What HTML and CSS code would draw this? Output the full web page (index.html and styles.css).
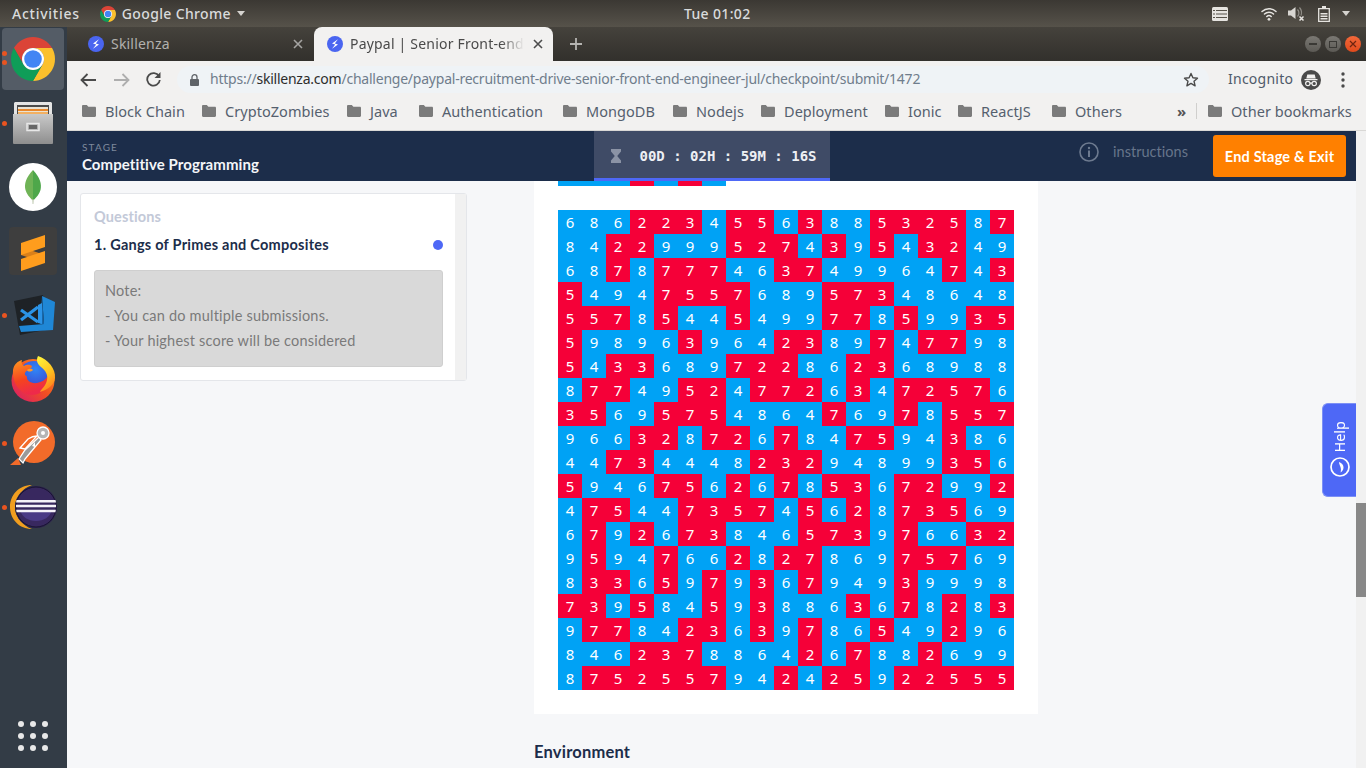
FILE: index.html
```html
<!DOCTYPE html>
<html lang="en">
<head>
<meta charset="utf-8">
<title>Paypal | Senior Front-end Engineer</title>
<link rel="stylesheet" href="styles.css">
</head>
<body>
<svg class="defs" width="0" height="0" aria-hidden="true">
  <symbol id="chrome" viewBox="4 4 40 40">
    <path fill="#db4437" d="M41.32 14A20 20 0 0 0 6.68 14L15.34 29A10 10 0 0 1 24 14Z"/>
    <path fill="#fbc02d" d="M24 44A20 20 0 0 0 41.32 14H24A10 10 0 0 1 32.66 29Z"/>
    <path fill="#0f9d58" d="M6.68 14A20 20 0 0 0 24 44L32.66 29A10 10 0 0 1 15.34 29Z"/>
    <circle cx="24" cy="24" r="10" fill="#fff"/>
    <circle cx="24" cy="24" r="8" fill="#4285f4"/>
  </symbol>
  <symbol id="bolt" viewBox="0 0 16 16">
    <circle cx="8" cy="8" r="8" fill="#4a65f0"/>
    <path fill="#fff" d="M11 3.2 5 7.6l3.2.9L5 12.8l6-4.4-3.2-.9z"/>
  </symbol>
  <symbol id="folder" viewBox="0 0 14 12">
    <path fill="#7b7b7b" d="M0 1.2C0 .5.5 0 1.2 0h3.6l1.6 1.7h6.400c.7 0 1.200.5 1.200 1.200v7.900c0 .7-.5 1.200-1.200 1.200H1.200C.5 12 0 11.500 0 10.800z"/>
  </symbol>
</svg>

<header class="topbar">
  <span class="tb-label tb-activities">Activities</span>
  <svg class="tb-chrome"><use href="#chrome"/></svg>
  <span class="tb-label">Google Chrome</span>
  <span class="tb-tri"></span>
  <span class="tb-label tb-clock">Tue 01:02</span>
  <div class="tb-tray">
    <svg class="tray-list" viewBox="0 0 16 14"><rect width="16" height="14" rx="1.500" fill="#e6e4e0"/><path stroke="#57534a" stroke-width="1.200" d="M1 3.500h2M4 3.500h11M1 7h2M4 7h11M1 10.500h2M4 10.500h11"/></svg>
    <svg class="tray-wifi" viewBox="0 0 16 14"><g fill="none" stroke="#e6e4e0" stroke-width="1.500" stroke-linecap="round"><path d="M1 4.500a10 10 0 0 1 14 0"/><path d="M3.500 7a6.500 6.500 0 0 1 9 0"/><path d="M5.800 9.500a3.200 3.200 0 0 1 4.400 0"/></g><circle cx="8" cy="12.300" r="1.400" fill="#e6e4e0"/></svg>
    <svg class="tray-vol" viewBox="0 0 17 15"><path fill="#d8d6d2" d="M0 4.500h3L7.500 1v12L3 9.500H0z"/><g fill="none" stroke="#908d87" stroke-width="1.200"><path d="M9.500 3.500a5 5 0 0 1 0 7"/><path d="M11.500 1.500a8 8 0 0 1 1.500 8"/></g><path stroke="#e6e4e0" stroke-width="1.500" d="M11.500 10.500l4 4M15.500 10.500l-4 4"/></svg>
    <svg class="tray-bat" viewBox="0 0 12 16"><path fill="none" stroke="#e6e4e0" stroke-width="1.300" d="M.7 2.700h10.600v12.600H.7z"/><path fill="#e6e4e0" d="M4 0h4v2.500H4zM2.500 7h7v1.500h-7zM2.500 9.500h7V11h-7zM2.500 12h7v1.500h-7z"/></svg>
    <span class="tb-tri"></span>
  </div>
</header>

<div class="desktop">
  <nav class="dock">
    <div class="dock-item active">
      <span class="dot dot-a"></span><span class="dot dot-b"></span>
      <svg class="ic-chrome"><use href="#chrome"/></svg>
    </div>
    <div class="dock-item">
      <span class="dot"></span>
      <svg class="ic-44" viewBox="0 0 44 44">
        <defs><linearGradient id="cab" x1="0" y1="0" x2="0" y2="1"><stop offset="0" stop-color="#c9c9c9"/><stop offset="1" stop-color="#8e8e8e"/></linearGradient></defs>
        <path fill="#e4e4e4" d="M4 1h36l1 1v11H3V2z"/>
        <path fill="#4a4a4a" d="M6 4h32v9H6z"/>
        <path fill="#e9e3d5" d="M7 6h30v7H7z"/>
        <path fill="#e8872c" d="M7 8h30v2H7z"/>
        <path fill="#f2b062" d="M7 11h30v2H7z"/>
        <path fill="url(#cab)" d="M2 13h40v29a1 1 0 0 1-1 1H3a1 1 0 0 1-1-1z"/>
        <path fill="none" stroke="#e8e8e8" stroke-width="1.500" d="M16 22.500h12v7H16z"/>
        <path fill="#666" d="M18 24h8v4h-8z"/>
      </svg>
    </div>
    <div class="dock-item">
      <svg class="ic-48" viewBox="0 0 48 48">
        <circle cx="24" cy="24" r="24" fill="#fff"/>
        <path fill="#4ea74a" d="M24 7c7 7.500 9 14 7.500 20-1 4-4 7-6.700 10H24z"/>
        <path fill="#6fb356" d="M24 7c-7 7.500-9 14-7.500 20 1 4 4 7 6.700 10H24z"/>
        <path fill="#b8c4a8" d="M23.300 36h1.400l-.3 5h-.8z"/>
      </svg>
    </div>
    <div class="dock-item">
      <svg class="ic-48" viewBox="0 0 48 48">
        <rect width="48" height="48" rx="4" fill="#3e3e3e"/>
        <path fill="#d9801a" d="M12 20l24 8v8L12 28z"/>
        <path fill="#ff9d1d" d="M12 16 36 8v12L12 28z"/>
        <path fill="#ff9d1d" d="M12 32l24-8v12l-24 8z"/>
      </svg>
    </div>
    <div class="dock-item">
      <span class="dot"></span>
      <svg class="ic-44" viewBox="0 0 44 44">
        <path fill="#1e2226" d="M3 8 32 2l6 34-29 6z"/>
        <path fill="#1f87d6" d="M31 3l13 6-2 28-32 2-2-6 25-2z"/>
        <path fill="#1665a8" d="M31 3l2 28-4 .500z"/>
        <path fill="none" stroke="#2b93e6" stroke-width="3.200" d="M10 17l17 12M10 27l17-13"/>
        <path fill="#2b93e6" d="M27 12l4-2v21l-4-1z"/>
      </svg>
    </div>
    <div class="dock-item">
      <svg class="ic-46" viewBox="0 0 46 46">
        <defs>
          <linearGradient id="ffb" x1="0" y1="1" x2="1" y2="0"><stop offset="0" stop-color="#d9166f"/><stop offset=".5" stop-color="#f04e23"/><stop offset="1" stop-color="#ff9a1b"/></linearGradient>
          <radialGradient id="ffc" cx=".55" cy=".3" r=".75"><stop offset="0" stop-color="#2f86f7"/><stop offset=".7" stop-color="#3a55d8"/><stop offset="1" stop-color="#5b2aa5"/></radialGradient>
          <linearGradient id="ffy" x1=".2" y1="0" x2=".6" y2="1"><stop offset="0" stop-color="#fff23a"/><stop offset=".55" stop-color="#ffc21f"/><stop offset="1" stop-color="#ff7f1f"/></linearGradient>
          <linearGradient id="ffo" x1="0" y1="0" x2=".3" y2="1"><stop offset="0" stop-color="#ff9a1f"/><stop offset=".6" stop-color="#f5431f"/><stop offset="1" stop-color="#ee2a4a"/></linearGradient>
        </defs>
        <circle cx="23" cy="24.500" r="21.500" fill="url(#ffb)"/>
        <ellipse cx="24" cy="19" rx="15" ry="14" fill="url(#ffc)"/>
        <path fill="url(#ffo)" d="M3 14c1-6 5-9 9-10-1 2 0 5 2 6 3-2 6-1 8 0 0 3-6 4-7 7-1 2 2 3 2 4-1 3 4 7 10 6 5-1 8-3 11-7 3 8-5 19-16 19C11 39 2 28 3 14z"/>
        <path fill="#ff9a2a" d="M17 14c3-2 5-1 6 0-2 2-5 2-6 0z"/>
        <path fill="url(#ffy)" d="M28 0c-2 4-1 8 3 11 5 4 7 8 6 13-1 6-6 9-7 12 8-2 15-8 15-14C46 13 38 3 28 0z"/>
      </svg>
    </div>
    <div class="dock-item">
      <span class="dot"></span>
      <svg class="ic-46" viewBox="0 0 46 46">
        <circle cx="24" cy="22" r="21" fill="#f26b2a"/>
        <path fill="#f26b2a" d="M0 45l8-7 3 7z"/>
        <g transform="translate(-1 2)">
          <path fill="#9a9a9a" stroke="#fff" stroke-width="1.300" d="M10 37l6-9 14-13 2 3-11 13-5 6-2 4z"/>
          <path fill="#f26b2a" stroke="#fff" stroke-width="1.300" d="M11 26l8-9c3-2 6-3 9-3l-12 13z"/>
          <path fill="#fff" d="M23 24l3-4v5z"/>
          <circle cx="34" cy="11" r="6" fill="#b5b5b5" stroke="#fff" stroke-width="1.300"/>
          <circle cx="34" cy="11" r="2" fill="#fff"/>
        </g>
      </svg>
    </div>
    <div class="dock-item">
      <span class="dot"></span>
      <svg class="ic-50" viewBox="0 0 50 46">
        <path fill="#f19e1f" d="M24 1C11 1 2 11 2 23s9 22 22 22C15 42 7 33 7 23S15 4 24 1z"/>
        <circle cx="28" cy="23" r="21" fill="#2d2150"/>
        <circle cx="28" cy="23" r="20" fill="#38285f" stroke="#1a1533" stroke-width="1"/>
        <path fill="#4a3a85" d="M12 26h32c-2 7-8 11-16 11s-14-4-16-11z"/>
        <path fill="#f4f2f8" d="M8.500 16h39l.6 2.500H8zM8 20.700h40v2.600H8zM8.100 25.700h39.800l-.5 2.500H8.600z"/>
      </svg>
    </div>
    <div class="dock-item dock-apps">
      <svg class="ic-apps" viewBox="0 0 30 30"><g fill="#e8e8e8"><circle cx="3" cy="3" r="3"/><circle cx="15" cy="3" r="3"/><circle cx="27" cy="3" r="3"/><circle cx="3" cy="15" r="3"/><circle cx="15" cy="15" r="3"/><circle cx="27" cy="15" r="3"/><circle cx="3" cy="27" r="3"/><circle cx="15" cy="27" r="3"/><circle cx="27" cy="27" r="3"/></g></svg>
    </div>
  </nav>

  <div class="browser">
    <div class="tabstrip">
      <div class="tab">
        <svg class="favicon"><use href="#bolt"/></svg>
        <span class="tab-title">Skillenza</span>
        <svg class="tab-x" viewBox="0 0 10 10"><path stroke="#a5a4a2" stroke-width="1.600" d="M1 1l8 8M9 1 1 9"/></svg>
      </div>
      <div class="tab tab-active">
        <svg class="favicon"><use href="#bolt"/></svg>
        <span class="tab-title">Paypal | Senior Front-end Engineer</span>
        <svg class="tab-x" viewBox="0 0 10 10"><path stroke="#4c4c4c" stroke-width="1.600" d="M1 1l8 8M9 1 1 9"/></svg>
      </div>
      <svg class="tab-plus" viewBox="0 0 12 12"><path stroke="#b5b4b1" stroke-width="1.800" d="M6 0v12M0 6h12"/></svg>
      <div class="winbtns">
        <span class="winbtn"><span class="wb-min"></span></span>
        <span class="winbtn"><span class="wb-max"></span></span>
        <span class="winbtn wb-close"><svg viewBox="0 0 8 8"><path stroke="#6e2410" stroke-width="1.200" d="M1 1l6 6M7 1 1 7"/></svg></span>
      </div>
    </div>

    <div class="toolbar">
      <svg class="tool tool-back" viewBox="0 0 16 14"><path fill="none" stroke="#4a4a4a" stroke-width="1.800" d="M16 7H1.500M7.500 1 1.500 7l6 6"/></svg>
      <svg class="tool tool-fwd" viewBox="0 0 16 14"><path fill="none" stroke="#aeaeae" stroke-width="1.800" d="M0 7h14.500M8.500 1l6 6-6 6"/></svg>
      <svg class="tool tool-reload" viewBox="0 0 15 15"><path fill="none" stroke="#4a4a4a" stroke-width="1.800" d="M13 4.200A6.300 6.300 0 1 0 13.800 8"/><path fill="#4a4a4a" d="M14.500 0v6h-6z"/></svg>
      <div class="omnibox">
        <svg class="lock" viewBox="0 0 9 12"><path fill="none" stroke="#5f6368" stroke-width="1.300" d="M2 5.500V3.200a2.500 2.500 0 0 1 5 0v2.300"/><rect y="5" width="9" height="7" rx="1" fill="#5f6368"/></svg>
        <span class="url">https://<span class="url-host">skillenza.com</span>/challenge/paypal-recruitment-drive-senior-front-end-engineer-jul/checkpoint/submit/1472</span>
        <svg class="star" viewBox="0 0 16 16"><path fill="none" stroke="#4a4a4a" stroke-width="1.400" stroke-linejoin="round" d="M8 1.500l1.900 4.300 4.600.4-3.500 3 1.100 4.600L8 11.400l-4.100 2.400L5 9.200l-3.500-3 4.600-.4z"/></svg>
      </div>
      <span class="incog-label">Incognito</span>
      <svg class="incog" viewBox="0 0 20 20">
        <circle cx="10" cy="10" r="10" fill="#4a4a4a"/>
        <path fill="#f2f1f0" d="M6.300 4.500h7.400l1 4H5.300zM3.500 9h13v1.200h-13z"/>
        <g fill="none" stroke="#f2f1f0" stroke-width="1.200"><circle cx="6.800" cy="13.500" r="2.200"/><circle cx="13.200" cy="13.500" r="2.200"/><path d="M9 13.200h2"/></g>
      </svg>
      <svg class="kebab" viewBox="0 0 4 16"><g fill="#4a4a4a"><circle cx="2" cy="2" r="1.700"/><circle cx="2" cy="8" r="1.700"/><circle cx="2" cy="14" r="1.700"/></g></svg>
    </div>

    <div class="bookmarks">
      <div class="bm"><svg class="folder"><use href="#folder"/></svg>Block Chain</div>
      <div class="bm"><svg class="folder"><use href="#folder"/></svg>CryptoZombies</div>
      <div class="bm"><svg class="folder"><use href="#folder"/></svg>Java</div>
      <div class="bm"><svg class="folder"><use href="#folder"/></svg>Authentication</div>
      <div class="bm"><svg class="folder"><use href="#folder"/></svg>MongoDB</div>
      <div class="bm"><svg class="folder"><use href="#folder"/></svg>Nodejs</div>
      <div class="bm"><svg class="folder"><use href="#folder"/></svg>Deployment</div>
      <div class="bm"><svg class="folder"><use href="#folder"/></svg>Ionic</div>
      <div class="bm"><svg class="folder"><use href="#folder"/></svg>ReactJS</div>
      <div class="bm"><svg class="folder"><use href="#folder"/></svg>Others</div>
      <span class="bm-more">»</span>
      <span class="bm-sep"></span>
      <div class="bm"><svg class="folder"><use href="#folder"/></svg>Other bookmarks</div>
    </div>

    <div class="viewport">
      <div class="page">
        <div class="stagebar">
          <div class="stage-info">
            <div class="stage-label">STAGE</div>
            <div class="stage-name">Competitive Programming</div>
          </div>
          <div class="timer">
            <svg class="hourglass" viewBox="0 0 10 14"><path fill="#8b93a5" d="M0 0h10v2.500L6.200 7 10 11.500V14H0v-2.500L3.800 7 0 2.500z"/></svg>
            <span class="timer-text">00D : 02H : 59M : 16S</span>
          </div>
          <div class="stage-actions">
            <svg class="info" viewBox="0 0 20 20"><circle cx="10" cy="10" r="9" fill="none" stroke="#6d7a8f" stroke-width="1.600"/><path fill="#6d7a8f" d="M9 8.500h2V15H9z"/><circle cx="10" cy="6" r="1.200" fill="#6d7a8f"/></svg>
            <span class="instructions">instructions</span>
            <button class="endbtn">End Stage &amp; Exit</button>
          </div>
        </div>
        <div class="main">
          <aside class="qpanel">
            <div class="qpanel-body">
              <div class="q-head">Questions</div>
              <div class="q-item"><span>1. Gangs of Primes and Composites</span><span class="q-dot"></span></div>
              <div class="note">
                <div>Note:</div>
                <div>- You can do multiple submissions.</div>
                <div>- Your highest score will be considered</div>
              </div>
            </div>
            <div class="qpanel-track"></div>
          </aside>
          <section class="content">
            <div class="card">
              <div class="strip"><i></i><i></i><i></i><i class="r"></i><i></i><i class="r"></i><i></i></div>
              <div class="grid">
<i>6</i><i>8</i><i>6</i><i class="r">2</i><i class="r">2</i><i class="r">3</i><i>4</i><i class="r">5</i><i class="r">5</i><i>6</i><i class="r">3</i><i>8</i><i>8</i><i class="r">5</i><i class="r">3</i><i class="r">2</i><i class="r">5</i><i>8</i><i class="r">7</i>
<i>8</i><i>4</i><i class="r">2</i><i class="r">2</i><i>9</i><i>9</i><i>9</i><i class="r">5</i><i class="r">2</i><i class="r">7</i><i>4</i><i class="r">3</i><i>9</i><i class="r">5</i><i>4</i><i class="r">3</i><i class="r">2</i><i>4</i><i>9</i>
<i>6</i><i>8</i><i class="r">7</i><i>8</i><i class="r">7</i><i class="r">7</i><i class="r">7</i><i>4</i><i>6</i><i class="r">3</i><i class="r">7</i><i>4</i><i>9</i><i>9</i><i>6</i><i>4</i><i class="r">7</i><i>4</i><i class="r">3</i>
<i class="r">5</i><i>4</i><i>9</i><i>4</i><i class="r">7</i><i class="r">5</i><i class="r">5</i><i class="r">7</i><i>6</i><i>8</i><i>9</i><i class="r">5</i><i class="r">7</i><i class="r">3</i><i>4</i><i>8</i><i>6</i><i>4</i><i>8</i>
<i class="r">5</i><i class="r">5</i><i class="r">7</i><i>8</i><i class="r">5</i><i>4</i><i>4</i><i class="r">5</i><i>4</i><i>9</i><i>9</i><i class="r">7</i><i class="r">7</i><i>8</i><i class="r">5</i><i>9</i><i>9</i><i class="r">3</i><i class="r">5</i>
<i class="r">5</i><i>9</i><i>8</i><i>9</i><i>6</i><i class="r">3</i><i>9</i><i>6</i><i>4</i><i class="r">2</i><i class="r">3</i><i>8</i><i>9</i><i class="r">7</i><i>4</i><i class="r">7</i><i class="r">7</i><i>9</i><i>8</i>
<i class="r">5</i><i>4</i><i class="r">3</i><i class="r">3</i><i>6</i><i>8</i><i>9</i><i class="r">7</i><i class="r">2</i><i class="r">2</i><i>8</i><i>6</i><i class="r">2</i><i class="r">3</i><i>6</i><i>8</i><i>9</i><i>8</i><i>8</i>
<i>8</i><i class="r">7</i><i class="r">7</i><i>4</i><i>9</i><i class="r">5</i><i class="r">2</i><i>4</i><i class="r">7</i><i class="r">7</i><i class="r">2</i><i>6</i><i class="r">3</i><i>4</i><i class="r">7</i><i class="r">2</i><i class="r">5</i><i class="r">7</i><i>6</i>
<i class="r">3</i><i class="r">5</i><i>6</i><i>9</i><i class="r">5</i><i class="r">7</i><i class="r">5</i><i>4</i><i>8</i><i>6</i><i>4</i><i class="r">7</i><i>6</i><i>9</i><i class="r">7</i><i>8</i><i class="r">5</i><i class="r">5</i><i class="r">7</i>
<i>9</i><i>6</i><i>6</i><i class="r">3</i><i class="r">2</i><i>8</i><i class="r">7</i><i class="r">2</i><i>6</i><i class="r">7</i><i>8</i><i>4</i><i class="r">7</i><i class="r">5</i><i>9</i><i>4</i><i class="r">3</i><i>8</i><i>6</i>
<i>4</i><i>4</i><i class="r">7</i><i class="r">3</i><i>4</i><i>4</i><i>4</i><i>8</i><i class="r">2</i><i class="r">3</i><i class="r">2</i><i>9</i><i>4</i><i>8</i><i>9</i><i>9</i><i class="r">3</i><i class="r">5</i><i>6</i>
<i class="r">5</i><i>9</i><i>4</i><i>6</i><i class="r">7</i><i class="r">5</i><i>6</i><i class="r">2</i><i>6</i><i class="r">7</i><i>8</i><i class="r">5</i><i class="r">3</i><i>6</i><i class="r">7</i><i class="r">2</i><i>9</i><i>9</i><i class="r">2</i>
<i>4</i><i class="r">7</i><i class="r">5</i><i>4</i><i>4</i><i class="r">7</i><i class="r">3</i><i class="r">5</i><i class="r">7</i><i>4</i><i class="r">5</i><i>6</i><i class="r">2</i><i>8</i><i class="r">7</i><i class="r">3</i><i class="r">5</i><i>6</i><i>9</i>
<i>6</i><i class="r">7</i><i>9</i><i class="r">2</i><i>6</i><i class="r">7</i><i class="r">3</i><i>8</i><i>4</i><i>6</i><i class="r">5</i><i class="r">7</i><i class="r">3</i><i>9</i><i class="r">7</i><i>6</i><i>6</i><i class="r">3</i><i class="r">2</i>
<i>9</i><i class="r">5</i><i>9</i><i>4</i><i class="r">7</i><i>6</i><i>6</i><i class="r">2</i><i>8</i><i class="r">2</i><i class="r">7</i><i>8</i><i>6</i><i>9</i><i class="r">7</i><i class="r">5</i><i class="r">7</i><i>6</i><i>9</i>
<i>8</i><i class="r">3</i><i class="r">3</i><i>6</i><i class="r">5</i><i>9</i><i class="r">7</i><i>9</i><i class="r">3</i><i>6</i><i class="r">7</i><i>9</i><i>4</i><i>9</i><i class="r">3</i><i>9</i><i>9</i><i>9</i><i>8</i>
<i class="r">7</i><i class="r">3</i><i>9</i><i class="r">5</i><i>8</i><i>4</i><i class="r">5</i><i>9</i><i class="r">3</i><i>8</i><i>8</i><i>6</i><i class="r">3</i><i>6</i><i class="r">7</i><i>8</i><i class="r">2</i><i>8</i><i class="r">3</i>
<i>9</i><i class="r">7</i><i class="r">7</i><i>8</i><i>4</i><i class="r">2</i><i class="r">3</i><i>6</i><i class="r">3</i><i>9</i><i class="r">7</i><i>8</i><i>6</i><i class="r">5</i><i>4</i><i>9</i><i class="r">2</i><i>9</i><i>6</i>
<i>8</i><i>4</i><i>6</i><i class="r">2</i><i class="r">3</i><i class="r">7</i><i>8</i><i>8</i><i>6</i><i>4</i><i class="r">2</i><i>6</i><i class="r">7</i><i>8</i><i>8</i><i class="r">2</i><i>6</i><i>9</i><i>9</i>
<i>8</i><i class="r">7</i><i class="r">5</i><i class="r">2</i><i class="r">5</i><i class="r">5</i><i class="r">7</i><i>9</i><i>4</i><i class="r">2</i><i>4</i><i class="r">2</i><i class="r">5</i><i>9</i><i class="r">2</i><i class="r">2</i><i class="r">5</i><i class="r">5</i><i class="r">5</i>
              </div>
            </div>
            <h2 class="env">Environment</h2>
          </section>
        </div>
        <a class="help">
          <span class="help-text">Help</span>
          <svg class="help-icon" viewBox="0 0 20 20"><circle cx="10" cy="10" r="9" fill="none" stroke="#fff" stroke-width="1.700"/><path fill="#fff" d="M9 5c3 1 4.500 3 4.500 5.500 0 2.500-1.500 4-3 5 .7-2 .6-4-.2-6C9.800 8 9 6.500 9 5z"/></svg>
        </a>
      </div>
      <div class="scrollbar"><div class="thumb"></div></div>
    </div>
  </div>
</div>
</body>
</html>
```
FILE: styles.css
```css
* { box-sizing: border-box; }
html, body { margin: 0; height: 100%; overflow: hidden; }
body { width: 1366px; height: 768px; display: flex; flex-direction: column; font-family: "Noto Sans", sans-serif; background: #333c46; }
.defs { position: absolute; }

/* GNOME top bar */
.topbar { height: 27px; flex: none; display: flex; align-items: center; background: linear-gradient(#3b3833, #56524a); color: #dcdad6; position: relative; }
.tb-label { font: 500 14px/27px "Noto Sans", sans-serif; letter-spacing: .35px; color: #d9dbdc; white-space: nowrap; }
.tb-activities { margin-left: 12px; letter-spacing: .75px; }
.tb-chrome { width: 16px; height: 16px; margin: 0 6px 0 20px; }
.tb-tri { width: 0; height: 0; border: 4.500px solid transparent; border-top: 5px solid #d5d3cf; border-bottom: 0; margin-left: 6px; }
.tb-clock { margin-left: 439px; }
.tb-tray { position: absolute; right: 16px; top: 0; height: 27px; display: flex; align-items: center; }
.tray-list { width: 16px; height: 14px; margin-right: 33px; }
.tray-wifi { width: 16px; height: 14px; margin-right: 11px; }
.tray-vol { width: 17px; height: 15px; margin-right: 13px; }
.tray-bat { width: 12px; height: 16px; margin-right: 6px; }

/* Ubuntu dock */
.desktop { flex: 1; display: flex; min-height: 0; }
.dock { width: 67px; flex: none; background: #333c46; display: flex; flex-direction: column; gap: 2px; padding: 1px 3px 1px 2px; }
.dock-item { height: 62px; flex: none; position: relative; display: flex; align-items: center; justify-content: center; border-radius: 4px; }
.dock-item.active { background: #545c66; }
.dock-apps { margin-top: auto; }
.dot { position: absolute; left: 0; top: 29px; width: 5px; height: 5px; border-radius: 50%; background: #e95420; }
.dot-a { top: 23px; }
.dot-b { top: 32px; }
.ic-chrome { width: 44px; height: 44px; margin-left: -1px; }
.ic-44 { width: 44px; height: 44px; }
.ic-46 { width: 46px; height: 46px; }
.ic-48 { width: 48px; height: 48px; }
.ic-50 { width: 50px; height: 46px; }
.ic-apps { width: 30px; height: 30px; }

/* Chrome */
.browser { flex: 1; min-width: 0; display: flex; flex-direction: column; }
.tabstrip { height: 34px; flex: none; background: linear-gradient(#45423c, #32302c); display: flex; align-items: center; position: relative; }
.tab { width: 246px; height: 34px; display: flex; align-items: center; padding: 0 10px 0 21px; position: relative; }
.favicon { width: 16px; height: 16px; flex: none; }
.tab-title { margin: -2px 0 0 7px; font-size: 14px; color: #b2b1ae; letter-spacing: .2px; white-space: nowrap; overflow: hidden; flex: 1; }
.tab-x { width: 10px; height: 10px; flex: none; margin-left: 6px; }
.tab-active { width: 239px; padding: 0 10px 0 13px; background: #f2f1f0; border-radius: 8px 8px 0 0; margin-left: 1px; }
.tab-active .tab-title { color: #4a4a4a; flex: none; width: 176px; -webkit-mask-image: linear-gradient(90deg, #000 86%, transparent 99%); mask-image: linear-gradient(90deg, #000 86%, transparent 99%); }
.tab-active .tab-x { margin-left: auto; }
.tab-plus { width: 12px; height: 12px; margin-left: 17px; }
.winbtns { margin-left: auto; margin-right: 5px; display: flex; gap: 4px; }
.winbtn { width: 16px; height: 16px; border-radius: 50%; background: linear-gradient(#7a7873, #5c5a55); display: flex; align-items: center; justify-content: center; }
.wb-min { width: 8px; height: 1.500px; background: #3a3935; }
.wb-max { width: 8px; height: 7px; border: 1px solid #3a3935; }
.wb-close { background: linear-gradient(#f2683a, #e04a1c); }
.wb-close svg { width: 8px; height: 8px; }

.toolbar { height: 37px; flex: none; background: #f2f1f0; display: flex; align-items: center; padding-left: 13px; }
.tool { height: 14px; flex: none; }
.tool-back { width: 16px; }
.tool-fwd { width: 16px; margin-left: 18px; }
.tool-reload { width: 15px; height: 15px; margin-left: 16px; }
.omnibox { width: 1032px; height: 27px; flex: none; margin-left: 16px; border-radius: 14px; background: #eff3f6; display: flex; align-items: center; padding-left: 13px; }
.lock { width: 9px; height: 12px; flex: none; }
.url { margin: -2px 0 0 11px; font-size: 14px; color: #6f7d8c; white-space: nowrap; letter-spacing: -.23px; flex: 1; }
.url-host { color: #2d2d2d; }
.star { width: 16px; height: 16px; flex: none; margin-right: 10px; }
.incog-label { margin: -2px 0 0 19px; font-size: 14px; color: #4f5a6a; letter-spacing: .25px; white-space: nowrap; }
.incog { width: 20px; height: 20px; flex: none; margin-left: 8px; }
.kebab { width: 4px; height: 16px; flex: none; margin-left: 20px; }

.bookmarks { height: 33px; flex: none; background: #f2f1f0; border-bottom: 1px solid #d9d8d6; display: grid; grid-template-columns: 120px 145px 72px 144px 110px 88px 124px 73px 94px 125px 19px 12px auto; align-items: center; padding: 0 0 6px 15px; }
.bm { display: flex; align-items: center; font-size: 14.500px; line-height: 20px; color: #55606e; letter-spacing: .05px; white-space: nowrap; }
.folder { width: 14px; height: 12px; margin-right: 9px; flex: none; }
.bm-more { font-size: 15px; line-height: 20px; font-weight: 700; color: #555; }
.bm-sep { width: 1px; height: 16px; background: #d0cfcd; }

/* Page */
.viewport { flex: 1; min-height: 0; display: flex; position: relative; }
.page { flex: 1; min-width: 0; background: #f6f7f9; overflow: hidden; position: relative; font-family: Lato, sans-serif; }
.stagebar { height: 50px; background: #1c2d4a; display: grid; grid-template-columns: 1fr auto 1fr; align-items: stretch; }
.stage-info { padding: 10px 0 0 15px; }
.stage-label { font-size: 10px; line-height: 12px; letter-spacing: 1.150px; color: #7e899c; }
.stage-name { margin-top: 1px; font-size: 15px; line-height: 20px; font-weight: 700; color: #f4f6f9; letter-spacing: .09px; white-space: nowrap; }
.timer { width: 236px; background: #3f4b66; border-bottom: 3px solid #4e68f6; display: flex; align-items: center; padding: 3px 0 0 17px; }
.hourglass { width: 10px; height: 14px; flex: none; }
.timer-text { margin-left: 19px; font: 700 14px/1 "DejaVu Sans Mono", monospace; color: #eef0f4; white-space: nowrap; }
.stage-actions { display: flex; align-items: center; justify-content: flex-end; padding-right: 10px; }
.info { width: 20px; height: 20px; flex: none; margin: 0 14px 8px 0; }
.instructions { font-size: 14.500px; color: #67758b; margin: 0 25px 10px 0; letter-spacing: .03px; white-space: nowrap; }
.endbtn { width: 133px; height: 42px; border: 0; border-radius: 3px; background: #ff8000; color: #fff; font: 700 14.500px Lato, sans-serif; letter-spacing: .2px; padding: 0; margin-top: 0; }

.main { display: flex; padding-left: 13px; }
.qpanel { width: 387px; height: 188px; flex: none; margin-top: 12px; background: #fff; border: 1px solid #e4e6ea; border-radius: 3px; display: flex; }
.qpanel-body { flex: 1; padding: 13px 12px 0 13px; }
.qpanel-track { width: 11px; background: #f1f1f1; }
.q-head { font-size: 14.500px; line-height: 20px; font-weight: 700; color: #c3c9d8; letter-spacing: .12px; }
.q-item { margin-top: 8px; display: flex; align-items: center; justify-content: space-between; font-size: 14.500px; line-height: 20px; font-weight: 700; color: #1c2d4a; letter-spacing: .25px; }
.q-dot { width: 10px; height: 10px; border-radius: 50%; background: #4e68f6; flex: none; }
.note { margin-top: 15px; height: 97px; background: #d9d9d9; border: 1px solid #cfcfcf; border-radius: 3px; padding: 7px 10px; font-size: 14.500px; line-height: 25px; color: #7a7a7a; white-space: nowrap; letter-spacing: .2px; }

.content { width: 504px; flex: none; margin-left: 67px; }
.card { background: #fff; height: 533px; padding: 0 24px; }
.strip { display: flex; height: 5px; margin-bottom: 24px; }
.strip i { width: 24px; background: #00a2f5; }
.grid { display: grid; grid-template-columns: repeat(19, 24px); grid-auto-rows: 24px; }
.grid i { background: #00a2f5; color: #fff; font: normal 15px/24px "Noto Sans", sans-serif; text-align: center; }
.strip .r, .grid .r { background: #f50038; }
.env { margin: 28px 0 0; font-size: 16.500px; line-height: 20px; font-weight: 700; color: #1c2d4a; letter-spacing: .2px; }

.help { position: absolute; right: 0; top: 272px; width: 34px; height: 94px; background: #4e68f6; border-radius: 6px 0 0 6px; border: 1px solid #7d90f5; border-right: 0; display: flex; flex-direction: column; align-items: center; padding-top: 17px; }
.help-text { writing-mode: vertical-rl; transform: rotate(180deg); font: 14.500px/1 "Noto Sans", sans-serif; color: #fff; }
.help-icon { width: 20px; height: 20px; margin-top: 4px; }

.scrollbar { width: 10px; flex: none; background: #f1f1f1; position: relative; }
.thumb { position: absolute; left: 0; right: 0; top: 372px; height: 94px; background: #888; }
```
